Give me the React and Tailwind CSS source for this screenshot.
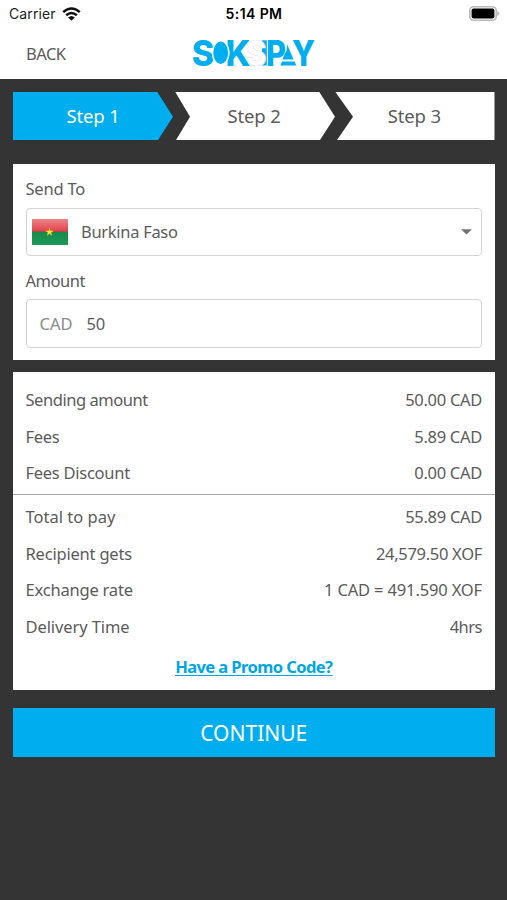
import React from "react";

const STEP_FILL = "#00aeef";

function Wifi() {
  return (
    <svg width="19" height="14" viewBox="0 0 19 14" className="ml-[6px] shrink-0">
      <g fill="none" stroke="#111" strokeWidth="2.5">
        <path d="M1.2 5.1 Q9.5 -2.2 17.8 5.1" />
        <path d="M4.2 8.3 Q9.5 3.6 14.8 8.3" />
      </g>
      <path d="M6.2 10.6 Q9.5 7.6 12.8 10.6 L9.5 13.8 Z" fill="#111" />
    </svg>
  );
}

function Battery() {
  return (
    <svg width="31" height="15" viewBox="0 0 31 15">
      <rect x="0.8" y="0.8" width="26.4" height="13.4" rx="3.8" fill="#fff" stroke="#b9b9b9" strokeWidth="1.6" />
      <rect x="2.6" y="2.6" width="22.8" height="9.8" rx="1.8" fill="#000" />
      <path d="M28.3 5 Q30.3 6 30.3 7.5 Q30.3 9 28.3 10 Z" fill="#b9b9b9" />
    </svg>
  );
}

function Logo() {
  return (
    <svg
      width="136"
      height="48"
      viewBox="185 29 136 48"
      fontFamily="Inter, 'Liberation Sans', sans-serif"
      fontWeight="800"
      fontSize="35"
      fill={STEP_FILL}
    >
      <text x="225.5" y="65.5" textLength="25" lengthAdjust="spacingAndGlyphs">K</text>
      <text x="191.8" y="65.5" textLength="22.5" lengthAdjust="spacingAndGlyphs">S</text>
      <ellipse cx="220.7" cy="52.8" rx="8.2" ry="12" fill={STEP_FILL} stroke="#fff" strokeWidth="1.5" />
      <rect x="262" y="40.3" width="4.8" height="25.2" />
      <text x="266" y="65.5" textLength="20" lengthAdjust="spacingAndGlyphs">P</text>
      <text x="246" y="65.5" textLength="20.5" lengthAdjust="spacingAndGlyphs" fill="#fff" stroke="#e6e6e6" strokeWidth="0.7">S</text>
      <text x="292" y="65.5" textLength="23" lengthAdjust="spacingAndGlyphs">Y</text>
      <path d="M287 44 L293.5 59.4 H282.5 L284.6 54 Q287.6 51 287 44 Z" />
      <path d="M282 61.6 H294.6 L296.3 65.5 H280.4 Z" />
    </svg>
  );
}

function Flag() {
  return (
    <svg width="36" height="26" viewBox="0 0 36 26" className="shrink-0">
      <defs>
        <linearGradient id="red" x1="0" y1="0" x2="0" y2="1">
          <stop offset="0" stopColor="#ec8488" />
          <stop offset="0.7" stopColor="#e5535a" />
          <stop offset="1" stopColor="#e03a42" />
        </linearGradient>
        <linearGradient id="green" x1="0" y1="0" x2="0" y2="1">
          <stop offset="0" stopColor="#16894a" />
          <stop offset="1" stopColor="#1b9b58" />
        </linearGradient>
      </defs>
      <rect width="36" height="13" fill="url(#red)" />
      <rect y="12.7" width="36" height="13.3" fill="url(#green)" />
      <path d="M17.5 9.2l.9 2.7h2.8l-2.3 1.7.9 2.7-2.3-1.7-2.3 1.7.9-2.7-2.3-1.7h2.8z" fill="#ffe62b" stroke="#f5c52b" strokeWidth="0.5" />
    </svg>
  );
}

function Row({ label, value, labelClass = "", valueClass = "tracking-[-0.3px]" }) {
  return (
    <div className="flex h-[36.7px] items-center justify-between">
      <span className={labelClass}>{label}</span>
      <span className={valueClass}>{value}</span>
    </div>
  );
}

export default function App() {
  return (
    <div className="flex h-[900px] w-[507px] flex-col overflow-hidden whitespace-nowrap bg-[#343434] font-['Noto_Sans',sans-serif] text-[16.5px] leading-6 text-[#5b5b5b]">
      <header className="h-[79px] shrink-0 bg-white">
        <div className="grid h-[27px] grid-cols-3 items-center px-[9px] font-['Inter',sans-serif] text-[14px] text-[#222]">
          <div className="flex items-center">
            <span className="tracking-[0.1px]">Carrier</span>
            <Wifi />
          </div>
          <span className="pl-[1px] text-center text-[14px] font-semibold tracking-[0.4px] text-black">5:14 PM</span>
          <div className="-mr-[2px] flex justify-end"><Battery /></div>
        </div>
        <div className="grid h-[52px] grid-cols-3 items-center px-[26px]">
          <span className="pt-[1px] tracking-[-0.5px]">BACK</span>
          <div className="flex justify-center"><Logo /></div>
        </div>
      </header>

      <main className="flex flex-col px-[13px] pt-[12.5px]">
        <nav className="grid h-[48.5px] w-[481.5px] grid-cols-[162px_162px_157.5px] text-[18.5px] tracking-[-0.15px]">
          <div className="flex w-[160px] items-center justify-center bg-[#00aeef] text-white [clip-path:polygon(0_0,144px_0,100%_52%,145px_100%,0_100%)]">
            <span>Step 1</span>
          </div>
          <div className="flex w-[160px] items-center justify-center bg-white pr-[2px] [clip-path:polygon(0_0,144px_0,100%_52%,145px_100%,1px_100%,15px_52%)]">
            <span>Step 2</span>
          </div>
          <div className="-ml-[2px] flex items-center justify-center bg-white pr-[1px] [clip-path:polygon(0_0,100%_0,100%_100%,2px_100%,18px_52%)]">
            <span>Step 3</span>
          </div>
        </nav>

        <section className="mt-[24px] h-[195.5px] w-[481.5px] bg-white px-[12.5px] pt-[13px]">
          <div className="h-[30.5px] tracking-[-0.2px]"><span>Send To</span></div>
          <div className="flex h-[48.5px] items-center rounded-[4px] border-[1.5px] border-[#d4d4d4] pl-[5.5px] pr-[9px]">
            <Flag />
            <span className="ml-[13px] flex-1 tracking-[-0.3px]">Burkina Faso</span>
            <svg width="11" height="6" viewBox="0 0 11 6"><path d="M0 .3H11L5.5 5.5Z" fill="#737373" /></svg>
          </div>
          <div className="mt-[12.5px] h-[30.5px] tracking-[-0.45px]"><span>Amount</span></div>
          <div className="flex h-[48.5px] items-center rounded-[4px] border-[1.5px] border-[#d4d4d4] pl-[13px] pt-[1px]">
            <span className="text-[#8a8a8a]">CAD</span>
            <span className="ml-[14px] tracking-[-0.3px]">50</span>
          </div>
        </section>

        <section className="mt-[12.5px] h-[317.5px] w-[481.5px] bg-white pt-[9.5px]">
          <div className="h-[113px] border-b border-[#aaa] px-[12.5px]">
            <Row label="Sending amount" value="50.00 CAD" labelClass="tracking-[-0.45px]" />
            <Row label="Fees" value="5.89 CAD" labelClass="tracking-[-0.3px]" />
            <Row label="Fees Discount" value="0.00 CAD" labelClass="tracking-[-0.27px]" />
          </div>
          <div className="px-[12.5px] pt-[4.2px]">
            <Row label="Total to pay" value="55.89 CAD" />
            <Row label="Recipient gets" value="24,579.50 XOF" labelClass="tracking-[-0.2px]" />
            <Row label="Exchange rate" value="1 CAD = 491.590 XOF" labelClass="tracking-[-0.2px]" valueClass="tracking-[-0.15px]" />
            <Row label="Delivery Time" value="4hrs" labelClass="tracking-[-0.1px]" valueClass="tracking-[-0.5px]" />
          </div>
          <div className="mt-[10px] text-center font-bold tracking-[-0.58px] text-[#00a5e6] underline underline-offset-2">
            <a>Have a Promo Code?</a>
          </div>
        </section>

        <button className="mt-[18.5px] h-[48.5px] w-[481.5px] bg-[#00aeef] pt-[2px] text-[21px] text-white">CONTINUE</button>
      </main>
    </div>
  );
}
